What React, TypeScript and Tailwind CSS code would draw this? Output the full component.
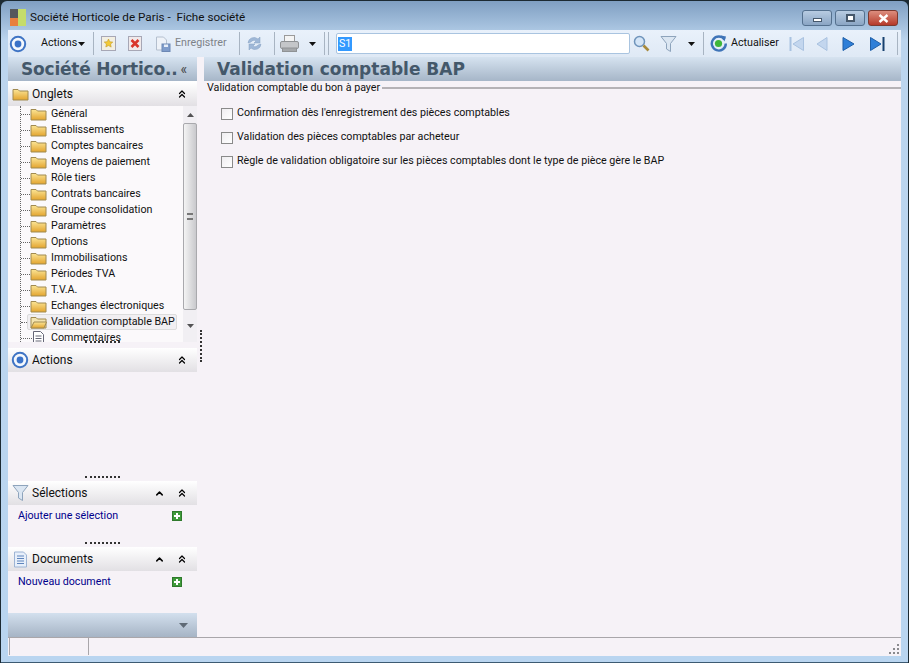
import { ChevronsUp, ChevronUp } from "lucide-react";

const tabs = [
  "Général",
  "Etablissements",
  "Comptes bancaires",
  "Moyens de paiement",
  "Rôle tiers",
  "Contrats bancaires",
  "Groupe consolidation",
  "Paramètres",
  "Options",
  "Immobilisations",
  "Périodes TVA",
  "T.V.A.",
  "Echanges électroniques",
];

const checks = [
  "Confirmation dès l'enregistrement des pièces comptables",
  "Validation des pièces comptables par acheteur",
  "Règle de validation obligatoire sur les pièces comptables dont le type de pièce gère le BAP",
];

const Folder = ({ open = false }: { open?: boolean }) => (
  <svg width="17" height="14" viewBox="0 0 17 14" className="shrink-0">
    <defs>
      <linearGradient id="fold" x1="0" y1="0" x2="0" y2="1">
        <stop offset="0" stopColor="#fbe596" />
        <stop offset="1" stopColor="#e3a42e" />
      </linearGradient>
    </defs>
    <path d="M1 2.5h5l1.5 1.5H16v9H1z" fill={open ? "#f3e4b0" : "url(#fold)"} stroke="#a08a50" strokeWidth="1" />
    {open && <path d="M1 13l3-6h12.5L14 13z" fill="url(#fold)" stroke="#a08a50" strokeWidth="1" />}
  </svg>
);

const Caret = ({ className = "" }: { className?: string }) => (
  <svg width="7" height="4" viewBox="0 0 7 4" className={`shrink-0 ${className}`}>
    <path d="M0 0h7L3.5 4z" fill="#111" />
  </svg>
);

const Sep = ({ className = "" }: { className?: string }) => (
  <div className={`w-px h-[23px] bg-[#a8b4c2] shrink-0 ${className}`} />
);

const Target = () => (
  <svg width="18" height="18" viewBox="0 0 18 18" className="shrink-0">
    <circle cx="9" cy="9" r="7.2" fill="#f4f8fd" stroke="#3f74c4" strokeWidth="2" />
    <circle cx="9" cy="9" r="3.4" fill="#3a72c8" />
  </svg>
);

const Funnel = () => (
  <svg width="17" height="18" viewBox="0 0 17 18" className="shrink-0">
    <path d="M1 1.5h15L10.5 8.5V16.5L6.5 14V8.5z" fill="#dbe6f2" stroke="#8ea4bc" strokeWidth="1" />
  </svg>
);

const DocIcon = () => (
  <svg width="15" height="17" viewBox="0 0 15 17" className="shrink-0">
    <path d="M1.5 1h9l3 3v12h-12z" fill="#e7effa" stroke="#9db4d4" />
    <path d="M4 5h7M4 7.5h7M4 10h7M4 12.5h7" stroke="#5f85bd" />
  </svg>
);

const Plus = () => (
  <div className="w-[10px] h-[10px] bg-[#3f9a3a] border border-[#2f7a2c] flex items-center justify-center">
    <svg width="6" height="6" viewBox="0 0 6 6">
      <path d="M3 0v6M0 3h6" stroke="#fff" strokeWidth="2" />
    </svg>
  </div>
);

const PanelHeader = ({
  icon,
  title,
  up = false,
}: {
  icon: React.ReactNode;
  title: string;
  up?: boolean;
}) => (
  <div className="h-[24px] flex items-center bg-gradient-to-b from-white to-[#e2e0e4] shrink-0">
    <div className="w-[18px] ml-[3px] flex justify-center">{icon}</div>
    <span className="ml-[3px] text-[12px] text-[#111]">{title}</span>
    <div className="ml-auto flex items-center mr-[9px]">
      {up && <ChevronUp size={11} strokeWidth={3.2} className="text-black mr-[11px]" />}
      <ChevronsUp size={12} strokeWidth={2.4} className="text-black" />
    </div>
  </div>
);

const Splitter = ({ className = "" }: { className?: string }) => (
  <div className={`flex justify-center shrink-0 ${className}`}>
    <div className="w-[35px] border-t-2 border-dotted border-[#333] mr-[1px]" />
  </div>
);

const Arrow = ({ dir, bar, faded }: { dir: "l" | "r"; bar?: boolean; faded?: boolean }) => {
  const fill = faded ? "#c3d6ee" : "#2f7fd8";
  const stroke = faded ? "#a9c2e0" : "#1f5fa8";
  return (
    <svg width="17" height="16" viewBox="0 0 17 16" className="shrink-0">
      {dir === "r" ? (
        <>
          <path d={bar ? "M1.5 1.5L12 8 1.5 14.5z" : "M3 1.5L14 8 3 14.5z"} fill={fill} stroke={stroke} />
          {bar && <path d="M14.5 1v14" stroke={faded ? "#a9c2e0" : "#17406f"} strokeWidth="2" />}
        </>
      ) : (
        <>
          <path d={bar ? "M15.5 1.5L5 8l10.5 6.5z" : "M13 1.5L3 8l10 6.5z"} fill={fill} stroke={stroke} />
          {bar && <path d="M2.5 1v14" stroke="#a9c2e0" strokeWidth="2" />}
        </>
      )}
    </svg>
  );
};

export default function App() {
  return (
    <div
      className="w-[909px] h-[663px] bg-[#1c2a33] overflow-hidden text-[10.7px] text-[#111]"
      style={{ fontFamily: 'Roboto, "Liberation Sans", Arial, sans-serif' }}
    >
      <div className="h-full rounded-t-[6px] border-b-2 border-[#3c5a72] bg-gradient-to-b from-[#7f9fc2] via-[#bcd5ee] via-[6%] to-[#b9d5f0] flex flex-col mx-px mt-px">
        {/* title bar */}
        <div className="h-[29px] flex items-center shrink-0 pl-[9px] pr-[10px] pt-[4px]">
          <div className="w-[16px] h-[17px] grid grid-cols-2 grid-rows-2 shrink-0">
            <div className="bg-[#55585c]" />
            <div className="bg-[#c5dc6a] row-span-2" />
            <div className="bg-[#e8803f]" />
          </div>
          <span className="ml-[4px] mt-[1px] text-[11.7px] whitespace-pre text-[#111]">Société Horticole de Paris -  Fiche société</span>
          <div className="ml-auto mt-[1px] flex items-center gap-[3px]">
            <div className="w-[30px] h-[16px] rounded-[3px] border border-[#54708e] bg-gradient-to-b from-[#b8cce2] to-[#8aa5c4] flex items-end justify-center pb-[3px]">
              <div className="w-[9px] h-[4px] bg-white border border-[#46586c]" />
            </div>
            <div className="w-[30px] h-[16px] rounded-[3px] border border-[#54708e] bg-gradient-to-b from-[#b8cce2] to-[#8aa5c4] flex items-center justify-center">
              <div className="w-[9px] h-[8px] border-2 border-[#46586c] bg-white" />
            </div>
            <div className="w-[30px] h-[16px] rounded-[3px] border border-[#7c3a30] bg-gradient-to-b from-[#dc8d7e] to-[#b5382a] flex items-center justify-center">
              <svg width="11" height="9" viewBox="0 0 11 9">
                <path d="M1.5 1l8 7M9.5 1l-8 7" stroke="#fff" strokeWidth="2.4" />
              </svg>
            </div>
          </div>
        </div>

        {/* client area */}
        <div className="flex-1 mx-[7px] flex flex-col min-h-0 bg-[#f6f2f7]">
          {/* toolbar */}
          <div className="h-[27px] bg-gradient-to-b from-[#e9f1fb] to-[#dfe9f5] flex items-center shrink-0 pl-[1px]">
            <Target />
            <span className="ml-[14px] w-[36px] whitespace-nowrap">Actions</span>
            <Caret className="ml-[1px]" />
            <Sep className="ml-[8px]" />
            <svg width="15" height="15" viewBox="0 0 15 15" className="ml-[7px] shrink-0">
              <rect x="0.5" y="0.5" width="14" height="14" fill="#f2efe2" stroke="#a7a7b5" />
              <path d="M7.5 3l1.3 2.8 3 .3-2.2 2 .6 3-2.7-1.5L4.8 11l.6-3-2.2-2 3-.3z" fill="#f2c935" stroke="#b98f1a" strokeWidth="0.5" />
            </svg>
            <svg width="14" height="15" viewBox="0 0 14 15" className="ml-[12px] shrink-0">
              <rect x="0.5" y="0.5" width="13" height="14" fill="#f0e9ea" stroke="#a7a7b5" />
              <path d="M3.5 4l7 7M10.5 4l-7 7" stroke="#d9352a" strokeWidth="2.6" />
            </svg>
            <svg width="16" height="16" viewBox="0 0 16 16" className="ml-[13px] shrink-0">
              <path d="M1.5 1h7l3 3v10h-10z" fill="#eef2f8" stroke="#b4bfce" />
              <rect x="7" y="8" width="8" height="7.5" fill="#7f9ccb" stroke="#6d88b4" />
              <rect x="9" y="8.5" width="4" height="2.5" fill="#e7eef8" />
            </svg>
            <span className="ml-[4px] w-[52px] whitespace-nowrap text-[#7d8288]">Enregistrer</span>
            <Sep className="ml-[12px]" />
            <svg width="17" height="17" viewBox="0 0 17 17" className="ml-[6px] shrink-0">
              <path d="M2 8a6 6 0 0 1 10-4l2-2v6H8l2-2a3.5 3.5 0 0 0-5 1z" fill="#9fb8d8" stroke="#86a0c2" strokeWidth="0.5" />
              <path d="M15 9a6 6 0 0 1-10 4l-2 2V9h6l-2 2a3.5 3.5 0 0 0 5-1z" fill="#9fb8d8" stroke="#86a0c2" strokeWidth="0.5" />
            </svg>
            <Sep className="ml-[11px]" />
            <svg width="19" height="17" viewBox="0 0 19 17" className="ml-[5px] shrink-0">
              <rect x="4.5" y="0.5" width="10" height="6" fill="#f4f4f4" stroke="#9a9a9a" />
              <rect x="0.5" y="6.5" width="18" height="7" rx="1.5" fill="#c4c6c9" stroke="#8f9295" />
              <rect x="2.5" y="13" width="14" height="3.5" fill="#a5a8ab" stroke="#8f9295" />
            </svg>
            <Caret className="ml-[10px]" />
            <Sep className="ml-[8px]" />
            <Sep className="ml-[3px]" />
            <div className="ml-[7px] w-[294px] h-[21px] bg-white border border-[#a9c4e0] rounded-[2px] flex items-center px-[1px] shrink-0">
              <span className="bg-[#3399ff] text-white leading-[14px] h-[14px] px-[1px]">S1</span>
            </div>
            <svg width="17" height="17" viewBox="0 0 17 17" className="ml-[3px] shrink-0">
              <circle cx="6.5" cy="6.5" r="5" fill="#d4e5f7" stroke="#6f94bb" strokeWidth="1.5" />
              <path d="M10.5 10.5L15.5 15.5" stroke="#a88a3c" strokeWidth="2.6" />
            </svg>
            <div className="ml-[10px]">
              <Funnel />
            </div>
            <Caret className="ml-[11px]" />
            <Sep className="ml-[8px]" />
            <svg width="17" height="17" viewBox="0 0 17 17" className="ml-[6px] shrink-0">
              <path d="M14.5 4.5A7 7 0 1 0 15.8 8.5" fill="none" stroke="#3f74b8" strokeWidth="2.4" />
              <path d="M11 0.5l5 1-1.5 5z" fill="#3f74b8" />
              <circle cx="8.5" cy="8.5" r="3.6" fill="#3fb63a" />
            </svg>
            <span className="ml-[4px] w-[47px] whitespace-nowrap">Actualiser</span>
            <div className="ml-[10px]">
              <Arrow dir="l" bar faded />
            </div>
            <div className="ml-[9px]">
              <Arrow dir="l" faded />
            </div>
            <div className="ml-[9px]">
              <Arrow dir="r" />
            </div>
            <div className="ml-[12px]">
              <Arrow dir="r" bar />
            </div>
            <Sep className="ml-[11px]" />
          </div>

          <div className="flex-1 flex min-h-0">
            {/* left panel */}
            <div className="w-[189px] flex flex-col shrink-0 relative">
              <div className="h-[24px] shrink-0 bg-gradient-to-b from-[#d6e3f0] to-[#a6b6c8] flex items-center pl-[13px]">
                <span
                  className="font-bold text-[17px] leading-none whitespace-nowrap tracking-[-0.2px] text-[#44586a]"
                  style={{ fontFamily: '"DejaVu Sans", sans-serif' }}
                >
                  Société Hortico..
                </span>
                <span className="ml-auto mr-[10px] text-[14px] leading-none text-[#444]">«</span>
              </div>
              <div className="h-px bg-white shrink-0" />
              <PanelHeader icon={<Folder />} title="Onglets" />

              {/* tree */}
              <div className="h-[236px] shrink-0 flex overflow-hidden bg-[#fbf9fb]">
                <div className="flex-1 overflow-hidden pl-[12px]">
                  <div className="border-l border-dotted border-[#666]">
                    {tabs.map((t) => (
                      <div key={t} className="h-[16px] flex items-center">
                        <div className="w-[9px] shrink-0 border-t border-dotted border-[#666]" />
                        <Folder />
                        <span className="ml-[4px] whitespace-nowrap">{t}</span>
                      </div>
                    ))}
                    <div className="h-[16px] flex items-center">
                      <div className="w-[6px] shrink-0 border-t border-dotted border-[#666]" />
                      <div className="flex items-center h-[16px] rounded-[2px] border border-[#dcdcdc] bg-[#f1eff2] pl-[2px] pr-[1px]">
                        <Folder open />
                        <span className="ml-[4px] whitespace-nowrap">Validation comptable BAP</span>
                      </div>
                    </div>
                    <div className="h-[16px] flex items-center">
                      <div className="w-[11px] shrink-0 border-t border-dotted border-[#666]" />
                      <svg width="13" height="15" viewBox="0 0 13 15" className="shrink-0">
                        <path d="M1.5.5h7l3 3v11h-10z" fill="#fff" stroke="#667" />
                        <path d="M3.5 5h6M3.5 7.5h6M3.5 10h6" stroke="#667" />
                      </svg>
                      <span className="ml-[6px] whitespace-nowrap">Commentaires</span>
                    </div>
                  </div>
                </div>
                {/* scrollbar */}
                <div className="w-[14px] bg-[#f1eff3] flex flex-col items-center shrink-0">
                  <div className="h-[17px] flex items-center justify-center">
                    <Caret className="rotate-180 opacity-70" />
                  </div>
                  <div className="w-[14px] h-[187px] rounded-[2px] border border-[#a9a9ad] bg-gradient-to-r from-[#f4f4f4] to-[#c9c9cd] flex items-center justify-center">
                    <div className="w-[6px] h-[7px] border-y-[2px] border-double border-[#777]" />
                  </div>
                  <div className="flex-1 flex items-center justify-center">
                    <Caret className="opacity-70" />
                  </div>
                </div>
              </div>
              <Splitter className="h-[6px] -mt-[1px] mb-[1px]" />

              <PanelHeader icon={<Target />} title="Actions" />
              <div className="h-[109px] shrink-0 flex items-end">
                <Splitter className="w-full mb-[3px]" />
              </div>
              <PanelHeader icon={<Funnel />} title="Sélections" up />
              <div className="h-[42px] shrink-0 flex flex-col">
                <div className="h-[22px] flex items-center justify-between pl-[10px] pr-[15px]">
                  <span className="text-[#00008b]">Ajouter une sélection</span>
                  <Plus />
                </div>
                <Splitter className="mt-auto mb-[3px]" />
              </div>
              <PanelHeader icon={<DocIcon />} title="Documents" up />
              <div className="h-[42px] shrink-0">
                <div className="h-[22px] flex items-center justify-between pl-[10px] pr-[15px]">
                  <span className="text-[#00008b]">Nouveau document</span>
                  <Plus />
                </div>
              </div>
              <div className="h-[24px] shrink-0 bg-gradient-to-b from-[#d3e0ee] to-[#a6b4c5] flex items-center justify-end pr-[9px]">
                <svg width="9" height="5" viewBox="0 0 9 5">
                  <path d="M0 0h9L4.5 5z" fill="#5f6a76" />
                </svg>
              </div>
            </div>

            {/* vertical splitter */}
            <div className="w-[7px] shrink-0 relative">
              <div className="absolute left-[3px] top-[273px] h-[32px] border-l-2 border-dotted border-[#333]" />
            </div>

            {/* content */}
            <div className="flex-1 flex flex-col min-w-0">
              <div className="h-[24px] shrink-0 bg-gradient-to-b from-[#d6e3f0] to-[#a6b6c8] flex items-center pl-[13px]">
                <span
                  className="font-bold text-[17px] leading-none text-[#44586a]"
                  style={{ fontFamily: '"DejaVu Sans", sans-serif' }}
                >
                  Validation comptable BAP
                </span>
              </div>
              <div className="flex items-center h-[14px] shrink-0 pl-[3px]">
                <span className="whitespace-nowrap">Validation comptable du bon à payer</span>
                <div className="flex-1 h-[2px] ml-[2px] bg-[#b5b2b6]" />
              </div>
              <div className="flex flex-col gap-[9px] mt-[11px] pl-[17px]">
                {checks.map((c) => (
                  <div key={c} className="h-[15px] flex items-center">
                    <div className="w-[12px] h-[12px] bg-gradient-to-br from-[#efedf0] to-white border border-[#8a8a8a] shrink-0" />
                    <span className="ml-[4px] whitespace-nowrap">{c}</span>
                  </div>
                ))}
              </div>
            </div>
          </div>

          {/* status bar */}
          <div className="h-[19px] shrink-0 border-t border-[#a9a6aa] flex items-stretch">
            <div className="w-[80px] ml-[1px] border-l border-r border-[#a9a6aa] mb-[1px]" />
            <div className="flex-1 relative">
              <svg width="11" height="11" viewBox="0 0 11 11" className="absolute right-[1px] bottom-[1px]">
                <path d="M8 0h2v2H8zM4 4h2v2H4zM8 4h2v2H8zM0 8h2v2H0zM4 8h2v2H4zM8 8h2v2H8z" fill="#8a8a8e" />
              </svg>
            </div>
          </div>
        </div>
        <div className="h-[6px] shrink-0" />
      </div>
    </div>
  );
}
